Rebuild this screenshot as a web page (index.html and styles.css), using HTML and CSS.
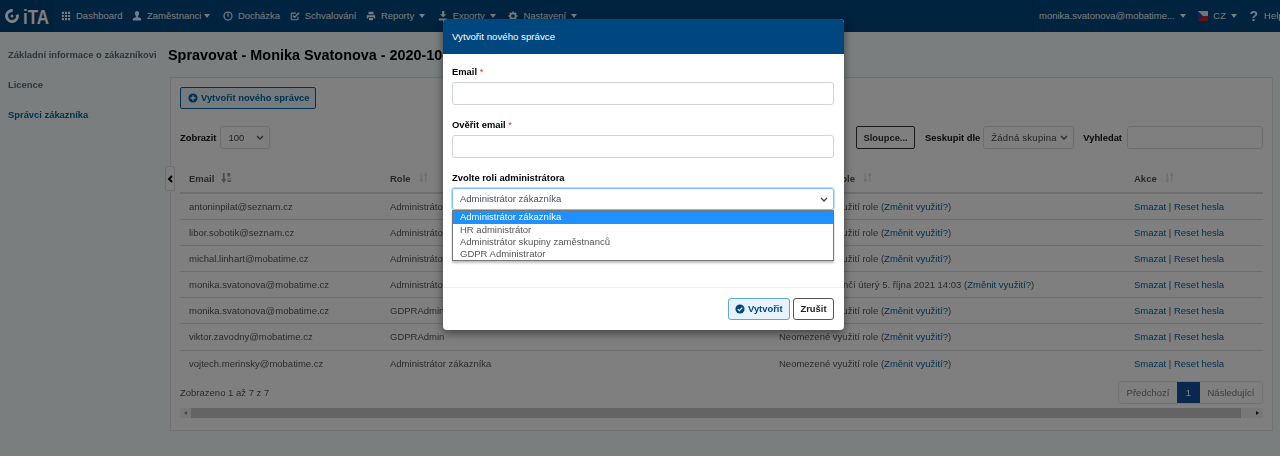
FILE: index.html
```html
<!DOCTYPE html>
<html lang="cs">
<head>
<meta charset="utf-8">
<title>Spravovat</title>
<link rel="stylesheet" href="styles.css">
</head>
<body>
<svg class="defs" width="0" height="0" aria-hidden="true">
  <symbol id="sort" viewBox="0 0 12 12"><path d="M3.500 1v9M2 8l1.500 2.500L5 8M8.500 11V2M7 4l1.500-2.500L10 4" fill="none" stroke="currentColor" stroke-width="1.300"/></symbol>
  <symbol id="sort-on" viewBox="0 0 12 12"><path d="M3 1v9M1 7.500 3 10.500 5 7.500" fill="none" stroke="currentColor" stroke-width="1.800"/><path d="M7 1h3v4H7zM7 7h4v1H7zM7 9h4v2H7z" fill="currentColor"/></symbol>
  <symbol id="ok" viewBox="0 0 12 12"><circle cx="6" cy="6" r="5.500" fill="currentColor"/><path d="M3.300 6.200 5.200 8 8.800 4.300" fill="none" stroke="#fff" stroke-width="1.500"/></symbol>
</svg>
<header class="nav">
  <div class="brand">
    <svg class="logo" width="48" height="16" viewBox="0 0 48 16"><circle cx="7" cy="8" r="5.400" fill="none" stroke="#fff" stroke-width="3" stroke-dasharray="27 7" transform="rotate(-15 7 8)"/><circle cx="7" cy="8" r="1.500" fill="#fff"/><text x="18" y="15.500" class="logo-text" textLength="26" lengthAdjust="spacingAndGlyphs">iTA</text></svg>
  </div>
  <nav class="menu">
    <a class="item"><svg class="ico" viewBox="0 0 12 12"><path d="M1 1h2.500v2.500H1zM4.700 1h2.600v2.500H4.700zM8.500 1H11v2.500H8.500zM1 4.700h2.500v2.600H1zM4.700 4.700h2.600v2.600H4.700zM8.500 4.700H11v2.600H8.500zM1 8.500h2.500V11H1zM4.700 8.500h2.600V11H4.700zM8.500 8.500H11V11H8.500z" fill="currentColor"/></svg>Dashboard</a>
    <a class="item"><svg class="ico" viewBox="0 0 12 12"><path d="M6 0C4.300 0 3.500 1.300 3.500 3c0 1.500.7 2.600 1.500 3.200v1L1 9v2.500h10V9L7 7.200v-1C7.800 5.600 8.500 4.500 8.500 3 8.500 1.300 7.700 0 6 0z" fill="currentColor"/></svg>Zaměstnanci<i class="caret tight"></i></a>
    <a class="item"><svg class="ico" viewBox="0 0 12 12"><circle cx="6" cy="6" r="4.800" fill="none" stroke="currentColor" stroke-width="1.500"/><path d="M6 3v3.300h-.1" fill="none" stroke="currentColor" stroke-width="1.500"/></svg>Docházka</a>
    <a class="item"><svg class="ico" viewBox="0 0 12 12"><path d="M9.500 7v2.500a1 1 0 0 1-1 1h-6a1 1 0 0 1-1-1v-6a1 1 0 0 1 1-1H7" fill="none" stroke="currentColor" stroke-width="1.300"/><path d="M3.500 5.500 5.500 7.500 11 2" fill="none" stroke="currentColor" stroke-width="1.600"/></svg>Schvalování</a>
    <a class="item"><svg class="ico" viewBox="0 0 12 12"><path d="M3 1h6v3H3zM1 5h10v4H9.500V7.500h-7V9H1zM3.500 8.500h5V11h-5z" fill="currentColor"/></svg>Reporty<i class="caret"></i></a>
    <a class="item"><svg class="ico" viewBox="0 0 12 12"><path d="M5 0h2.500v4H10L6.200 7.500 2.500 4H5zM1 9h10v2.500H1z" fill="currentColor"/></svg>Exporty<i class="caret"></i></a>
    <a class="item"><svg class="ico" viewBox="0 0 12 12"><circle cx="6" cy="6" r="3.200" fill="none" stroke="currentColor" stroke-width="2"/><path d="M6 .5v2M6 9.500v2M.5 6h2M9.500 6h2M2.100 2.100l1.400 1.400M8.500 8.500l1.400 1.400M2.100 9.900l1.400-1.400M8.500 3.500l1.400-1.400" stroke="currentColor" stroke-width="1.800"/></svg>Nastavení<i class="caret"></i></a>
  </nav>
  <div class="nav-right">
    <a class="item user">monika.svatonova@mobatime...<i class="caret"></i></a>
    <a class="item lang"><svg class="flag" width="10" height="10" viewBox="0 0 10 10"><rect width="10" height="5" fill="#e8e8f0"/><rect y="5" width="10" height="5" fill="#d0202a"/><path d="M0 0 5 5 0 10z" fill="#1b4f9c"/></svg>CZ<i class="caret"></i></a>
    <a class="item help"><span class="q">?</span>Help</a>
  </div>
</header>

<div class="layout">
  <aside class="side">
    <a class="side-link">Základní informace o zákazníkovi</a>
    <a class="side-link">Licence</a>
    <a class="side-link active">Správci zákazníka</a>
  </aside>
  <main class="main">
    <h1 class="title">Spravovat - Monika Svatonova - 2020-10-05</h1>
    <section class="panel">
      <button class="btn-new"><svg class="btn-ico" viewBox="0 0 12 12"><circle cx="6" cy="6" r="5.500" fill="currentColor"/><path d="M6 3v6M3 6h6" stroke="#fff" stroke-width="1.600"/></svg>Vytvořit nového správce</button>
      <div class="controls">
        <label class="ctl-label show-label">Zobrazit</label>
        <div class="fake-select show">100<svg class="chev" viewBox="0 0 8 5"><path d="M1 1l3 3 3-3" fill="none" stroke="currentColor" stroke-width="1.300"/></svg></div>
        <div class="spacer"></div>
        <button class="btn-cols">Sloupce...</button>
        <label class="ctl-label group">Seskupit dle</label>
        <div class="fake-select groupby">Žádná skupina<svg class="chev" viewBox="0 0 8 5"><path d="M1 1l3 3 3-3" fill="none" stroke="currentColor" stroke-width="1.300"/></svg></div>
        <label class="ctl-label search">Vyhledat</label>
        <div class="search-box"></div>
      </div>
      <div class="collapse-tab"><svg width="6" height="8" viewBox="0 0 6 8"><path d="M5 1 2 4l3 3" fill="none" stroke="#000" stroke-width="2"/></svg></div>
      <table class="grid">
        <thead>
          <tr><th>Email<svg class="sort on"><use href="#sort-on"/></svg></th><th>Role<svg class="sort"><use href="#sort"/></svg></th><th>Doba využití role<svg class="sort"><use href="#sort"/></svg></th><th>Akce<svg class="sort"><use href="#sort"/></svg></th></tr>
        </thead>
        <tbody>
          <tr><td>antoninpilat@seznam.cz</td><td>Administrátor zákazníka</td><td>Neomezené využití role (<a>Změnit využití?</a>)</td><td><a>Smazat</a> | <a>Reset hesla</a></td></tr>
          <tr><td>libor.sobotik@seznam.cz</td><td>Administrátor zákazníka</td><td>Neomezené využití role (<a>Změnit využití?</a>)</td><td><a>Smazat</a> | <a>Reset hesla</a></td></tr>
          <tr><td>michal.linhart@mobatime.cz</td><td>Administrátor zákazníka</td><td>Neomezené využití role (<a>Změnit využití?</a>)</td><td><a>Smazat</a> | <a>Reset hesla</a></td></tr>
          <tr><td>monika.svatonova@mobatime.cz</td><td>Administrátor zákazníka</td><td>Využití role skončí úterý 5. října 2021 14:03 (<a>Změnit využití?</a>)</td><td><a>Smazat</a> | <a>Reset hesla</a></td></tr>
          <tr><td>monika.svatonova@mobatime.cz</td><td>GDPRAdmin</td><td>Neomezené využití role (<a>Změnit využití?</a>)</td><td><a>Smazat</a> | <a>Reset hesla</a></td></tr>
          <tr><td>viktor.zavodny@mobatime.cz</td><td>GDPRAdmin</td><td>Neomezené využití role (<a>Změnit využití?</a>)</td><td><a>Smazat</a> | <a>Reset hesla</a></td></tr>
          <tr><td>vojtech.merinsky@mobatime.cz</td><td>Administrátor zákazníka</td><td>Neomezené využití role (<a>Změnit využití?</a>)</td><td><a>Smazat</a> | <a>Reset hesla</a></td></tr>
        </tbody>
      </table>
      <div class="foot">
        <span>Zobrazeno 1 až 7 z 7</span>
        <div class="pager"><span class="pg first">Předchozí</span><span class="pg cur">1</span><span class="pg last">Následující</span></div>
      </div>
      <div class="hscroll"><i class="arr left"></i><div class="thumb"></div><i class="arr right"></i></div>
    </section>
  </main>
</div>

<div class="backdrop"></div>
<div class="modal">
  <div class="modal-head">Vytvořit nového správce</div>
  <div class="modal-body">
    <div class="field"><label class="f-label">Email <em>*</em></label><div class="input"></div></div>
    <div class="field"><label class="f-label">Ověřit email <em>*</em></label><div class="input"></div></div>
    <div class="field last">
      <label class="f-label">Zvolte roli administrátora</label>
      <div class="input focus">Administrátor zákazníka<svg class="chev dark" viewBox="0 0 8 5"><path d="M1 1l3 3 3-3" fill="none" stroke="currentColor" stroke-width="1.300"/></svg></div>
      <ul class="dropdown">
        <li class="sel">Administrátor zákazníka</li>
        <li>HR administrátor</li>
        <li>Administrátor skupiny zaměstnanců</li>
        <li>GDPR Administrator</li>
      </ul>
    </div>
  </div>
  <div class="modal-foot">
    <button class="btn-ok"><svg class="btn-ico" viewBox="0 0 12 12"><use href="#ok"/></svg>Vytvořit</button>
    <button class="btn-cancel">Zrušit</button>
  </div>
</div>
</body>
</html>
```
FILE: styles.css
```css
* { box-sizing: border-box; }
html, body { margin: 0; height: 100%; }
body {
  width: 1280px; height: 456px; overflow: hidden;
  background: #f5fdff;
  font: 9.500px/1.2 "Liberation Sans", Arial, sans-serif;
  color: #333;
  display: flex; flex-direction: column;
  filter: blur(.3px);
}
.defs { position: absolute; }
a { color: #00669c; }

.nav { height: 32px; flex: none; background: #00467f; display: flex; color: #f2f6fa; }
.brand { width: 55px; flex: none; display: flex; align-items: center; padding-left: 5px; background: #004278; }
.logo-text { font: bold 20px "Liberation Sans", sans-serif; fill: #fff; }
.menu { display: flex; align-items: center; padding-left: 6px; }
.item { display: flex; align-items: center; color: inherit; white-space: nowrap; margin-right: 9.500px; }
.ico { width: 10px; height: 10px; margin-right: 5px; flex: none; }
.caret { width: 0; height: 0; border: 3px solid transparent; border-top: 4px solid currentColor; border-bottom: 0; margin-left: 5px; margin-right: 3px; }
.caret.tight { margin-left: 3px; }
.nav-right { margin-left: auto; width: 247px; flex: none; display: flex; align-items: center; border-left: 1px solid #003d6f; padding-left: 5px; }
.flag { margin-right: 5px; }
.q { font-size: 14px; font-weight: bold; margin-right: 6px; }
.help { margin: 0; }

.layout { flex: 1; display: flex; min-height: 0; }
.side { width: 168px; flex: none; padding: 17px 0 0 8px; display: flex; flex-direction: column; gap: 17px; }
.side-link { font-weight: bold; font-size: 9.400px; color: #5d6b76; height: 13px; white-space: nowrap; }
.side-link.active { color: #00669c; }
.main { flex: 1; min-width: 0; padding-right: 7px; }
.title { font-size: 14.400px; line-height: 18px; margin: 14px 0 0; color: #000; white-space: nowrap; }
.panel { position: relative; margin: 13px 0 0 2px; background: #fff; border: 1px solid #e2e2e2; height: 354px; padding: 9px; }

button { font: inherit; cursor: pointer; }
.btn-new { display: flex; align-items: center; height: 22px; width: 136px; padding: 0 7px; background: #e9f4fc; border: 1px solid #00669c; border-radius: 2px; color: #00669c; font-weight: bold; font-size: 9.400px; white-space: nowrap; }
.btn-ico { width: 10px; height: 10px; margin-right: 3px; flex: none; }

.controls { display: flex; align-items: center; height: 23px; margin-top: 17px; }
.ctl-label { font-weight: bold; color: #111; font-size: 9.400px; margin-right: 2px; white-space: nowrap; }
.ctl-label.show-label { margin-right: 4px; }
.fake-select { display: flex; align-items: center; justify-content: space-between; height: 23px; border: 1px solid #ddd; border-radius: 3px; padding: 0 5px 0 7px; color: #444; white-space: nowrap; }
.fake-select.show { width: 50px; }
.fake-select.groupby { width: 91px; letter-spacing: .25px; }
.chev { width: 8px; height: 5px; color: #555; flex: none; }
.spacer { flex: 1; }
.btn-cols { height: 23px; width: 59px; background: #fff; border: 1px solid #333; border-radius: 2px; font-weight: bold; font-size: 9.400px; color: #333; padding: 0; margin-right: 10px; white-space: nowrap; }
.ctl-label.group { margin-right: 3px; }
.ctl-label.search { margin: 0 5px 0 9px; }
.search-box { width: 136px; height: 23px; border: 1px solid #ddd; border-radius: 3px; }

.collapse-tab { position: absolute; left: -6px; top: 88px; width: 10px; height: 25px; background: #fff; border: 1px solid #ddd; border-radius: 2px; display: flex; align-items: center; justify-content: center; }

.grid { width: 1083px; margin-top: 11px; border-collapse: collapse; table-layout: fixed; }
.grid th:nth-child(1) { width: 201px; }
.grid th:nth-child(2) { width: 389px; }
.grid th:nth-child(3) { width: 355px; }
.grid th { height: 33px; text-align: left; padding: 5px 0 0 9px; color: #555; border-bottom: 2px solid #ddd; }
.grid td { height: 26.200px; padding: 0 0 0 9px; border-bottom: 1px solid #ddd; color: #555; white-space: nowrap; }
.grid tr:last-child td { border-bottom: 0; }
.sort { width: 11px; height: 11px; margin-left: 7px; color: #ddd; vertical-align: -1px; }
.sort.on { color: #999; }

.foot { display: flex; justify-content: space-between; align-items: center; height: 24px; margin-top: 4px; color: #555; }
.pager { display: flex; height: 23px; width: 145px; border: 1px solid #e6e6e6; border-radius: 3px; color: #777; }
.pg { display: flex; align-items: center; justify-content: center; }
.pg.first { width: 58px; }
.pg.last { flex: 1; }
.pg.cur { width: 23px; background: #14509f; color: #fff; }
.hscroll { display: flex; height: 10px; margin-top: 4px; background: #f1f1f1; align-items: stretch; }
.thumb { flex: 1; background: #c8c8c8; margin-right: 11px; }
.arr { width: 11px; display: flex; align-items: center; justify-content: center; }
.arr::before { content: ""; border: 2.500px solid transparent; }
.arr.left::before { border-right: 3px solid #888; border-left: 0; }
.arr.right::before { border-left: 3px solid #222; border-right: 0; }

.backdrop { position: fixed; inset: 0; background: rgba(0,0,0,.5); }
.modal { position: fixed; left: 443px; top: 19px; width: 401px; height: 311px; background: #fff; border-radius: 4px; overflow: hidden; box-shadow: 0 3px 10px rgba(0,0,0,.5); display: flex; flex-direction: column; }
.modal-head { height: 35px; flex: none; background: #00467f; color: #fff; font-size: 9.700px; display: flex; align-items: center; padding-left: 9px; }
.modal-body { flex: 1; padding: 12px 10px 0 9px; border-bottom: 1px solid #eee; }
.field { margin-bottom: 14px; position: relative; }
.f-label { display: block; font-weight: bold; font-size: 9.400px; color: #000; height: 16px; }
.f-label em { font-style: normal; color: #d33; font-weight: normal; }
.input { height: 23px; border: 1px solid #ced4da; border-radius: 3px; display: flex; align-items: center; justify-content: space-between; padding: 0 5px 0 7px; color: #495057; }
.input.focus { border-color: #80bdff; box-shadow: 0 0 0 1px rgba(0,123,255,.25); height: 22px; }
.chev.dark { color: #444; }
.dropdown { position: absolute; left: 0; right: 0; top: 38px; margin: 0; padding: 0; list-style: none; background: #fff; border: 1px solid #767676; box-shadow: 0 2px 2px rgba(0,0,0,.25); color: #555; line-height: 12px; }
.dropdown li { padding-left: 7px; height: 12px; }
.dropdown li.sel { background: #1e90ff; color: #fff; height: 13px; }
.modal-foot { height: 42px; flex: none; display: flex; align-items: center; justify-content: flex-end; gap: 3px; padding-right: 10px; }
.btn-ok { display: flex; align-items: center; height: 22px; width: 62px; padding: 0 6px; background: #e7f3fb; border: 1px solid #5aa7d8; border-radius: 3px; color: #00467f; font-weight: bold; font-size: 9.400px; white-space: nowrap; }
.btn-cancel { height: 22px; width: 41px; padding: 0; background: #fff; border: 1px solid #555; border-radius: 3px; color: #222; font-weight: bold; font-size: 9.400px; }
```
